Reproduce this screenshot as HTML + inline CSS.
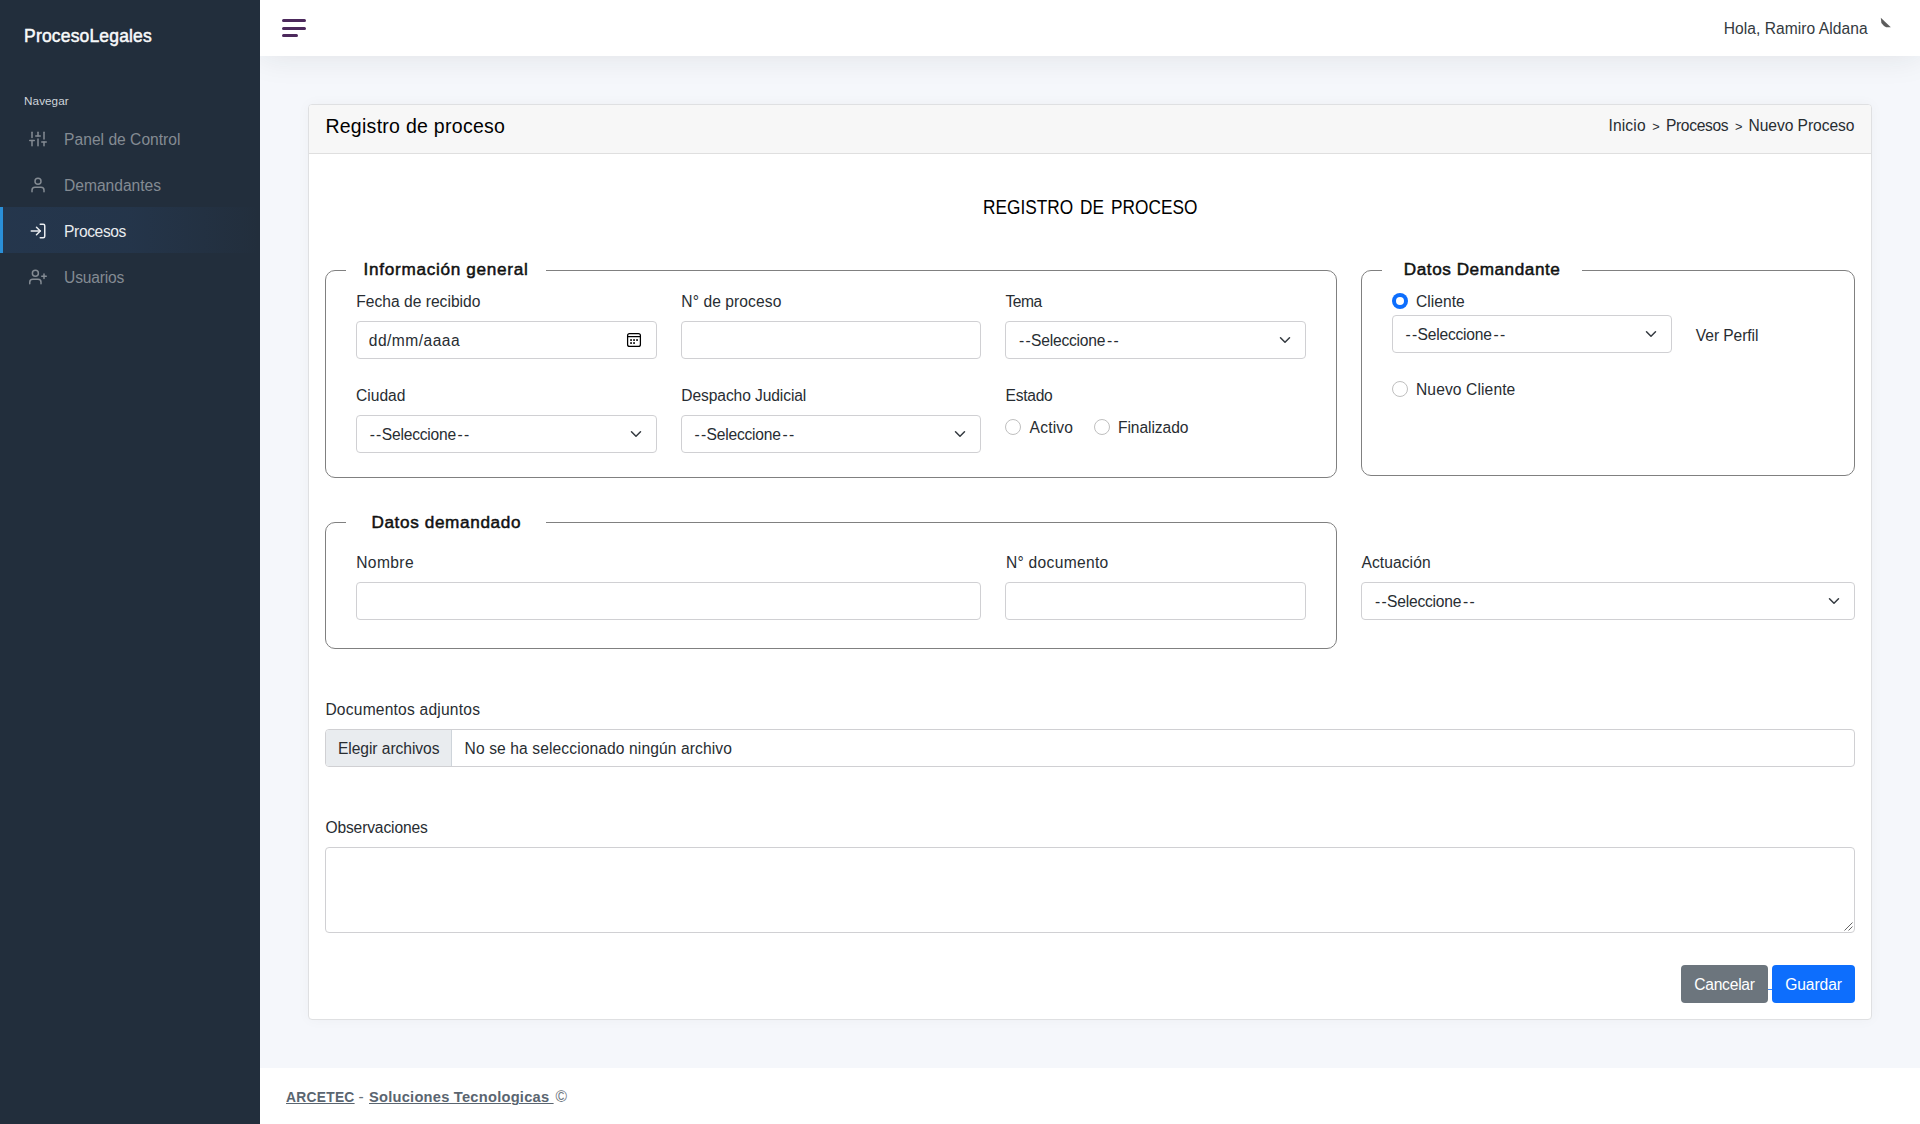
<!DOCTYPE html>
<html lang="es">
<head>
<meta charset="utf-8">
<title>Registro de proceso</title>
<style>
*{box-sizing:border-box;margin:0;padding:0}
html,body{width:1920px;height:1124px;overflow:hidden}
body{background:#f5f7fb;font-family:"Liberation Sans",Arial,sans-serif;position:relative;color:#212529}
.abs{position:absolute}
.t{position:absolute;display:block;line-height:0;white-space:nowrap;text-decoration:none;margin:0}
#sidebar{left:0;top:0;width:260px;height:1124px;background:#222e3c}
#active{left:0;top:207px;width:260px;height:46px;background:linear-gradient(90deg,rgba(59,125,221,.1),rgba(59,125,221,.088) 50%,transparent);border-left:3px solid #2a8fd8}
#topbar{left:0;top:0;width:1660px;height:56px;background:#fff;box-shadow:0 0 32px 0 rgba(33,37,41,.1)}
.hb{position:absolute;left:282px;height:3px;background:#4c295c;border-radius:1.5px}
#card{left:308px;top:104px;width:1564px;height:916px;background:#fff;border:1px solid #dfe0e2;border-radius:4px;box-shadow:0 0 14px 0 rgba(33,37,41,.035)}
#cardhead{left:309px;top:105px;width:1562px;height:49px;background:#f7f7f7;border-bottom:1px solid #dfdfdf;border-radius:3px 3px 0 0}
.fs{position:absolute;border:1px solid #808080;border-radius:10px}
.lgmask{position:absolute;height:3px;background:#fff;width:200px}
.inp{position:absolute;height:38px;background:#fff;border:1px solid #d0d0d3;border-radius:4px}
.chev{position:absolute;width:16px;height:12px}
.radio{position:absolute;width:16px;height:16px;border-radius:50%;border:1px solid #bfbfbf;background:#fff}
.radio.on{border:none;background:#0d6efd}
.radio.on:after{content:"";position:absolute;left:4px;top:4px;width:8px;height:8px;border-radius:50%;background:#fff}
.btn{position:absolute;height:38px;border-radius:4px}
#footer{left:260px;top:1068px;width:1660px;height:56px;background:#fff}
svg.ic{position:absolute;width:18px;height:18px;fill:none;stroke-width:2;stroke-linecap:round;stroke-linejoin:round}
</style>
</head>
<body>
<aside id="sidebar" class="abs"></aside>
<div id="active" class="abs"></div>
<div class="abs" style="left:260px;top:0;width:1660px;height:300px;overflow:hidden"><header id="topbar" class="abs"></header></div>
<div class="hb" style="top:19px;width:24px"></div>
<div class="hb" style="top:27px;width:24px"></div>
<div class="hb" style="top:34px;width:16px"></div>
<svg class="abs" style="left:1878px;top:15px" width="16" height="16" viewBox="0 0 16 16"><path d="M2.8 2.8 L12.8 12.3 L8.2 12.3 Q5.4 10.8 3.4 7.9 Z" fill="#5c5c5c"/></svg>

<svg class="ic" style="left:29px;top:130px" viewBox="0 0 24 24" stroke="#848b93"><line x1="4" y1="21" x2="4" y2="14"/><line x1="4" y1="10" x2="4" y2="3"/><line x1="12" y1="21" x2="12" y2="12"/><line x1="12" y1="8" x2="12" y2="3"/><line x1="20" y1="21" x2="20" y2="16"/><line x1="20" y1="12" x2="20" y2="3"/><line x1="1" y1="14" x2="7" y2="14"/><line x1="9" y1="8" x2="15" y2="8"/><line x1="17" y1="16" x2="23" y2="16"/></svg>
<svg class="ic" style="left:29px;top:176px" viewBox="0 0 24 24" stroke="#848b93"><path d="M20 21v-2a4 4 0 0 0-4-4H8a4 4 0 0 0-4 4v2"/><circle cx="12" cy="7" r="4"/></svg>
<svg class="ic" style="left:29px;top:222px" viewBox="0 0 24 24" stroke="#e9ecef"><path d="M15 3h4a2 2 0 0 1 2 2v14a2 2 0 0 1-2 2h-4"/><polyline points="10 17 15 12 10 7"/><line x1="15" y1="12" x2="3" y2="12"/></svg>
<svg class="ic" style="left:29px;top:268px" viewBox="0 0 24 24" stroke="#848b93"><path d="M16 21v-2a4 4 0 0 0-4-4H5a4 4 0 0 0-4 4v2"/><circle cx="8.5" cy="7" r="4"/><line x1="20" y1="8" x2="20" y2="14"/><line x1="23" y1="11" x2="17" y2="11"/></svg>

<main id="card" class="abs"></main>
<div id="cardhead" class="abs"></div>

<!-- fieldsets -->
<div class="fs" style="left:325px;top:270px;width:1012px;height:208px"></div>
<div class="lgmask" style="left:346px;top:269px"></div>
<div class="fs" style="left:1361px;top:270px;width:494px;height:206px"></div>
<div class="lgmask" style="left:1382px;top:269px"></div>
<div class="fs" style="left:325px;top:522px;width:1012px;height:127px"></div>
<div class="lgmask" style="left:346px;top:521px"></div>

<!-- row 1 -->
<div class="inp" style="left:356px;top:321px;width:301px"></div>
<svg class="abs" style="left:626px;top:332px" width="16" height="16" viewBox="0 0 16 16" fill="none" stroke="#000" stroke-width="1.25"><rect x="1.6" y="1.6" width="12.8" height="12.8" rx="2"/><line x1="1.6" y1="4.6" x2="14.4" y2="4.6"/><g fill="#000" stroke="none"><rect x="4.2" y="7.2" width="1.7" height="1.7"/><rect x="7.2" y="7.2" width="1.7" height="1.7"/><rect x="10.2" y="7.2" width="1.7" height="1.7"/><rect x="4.2" y="10.2" width="1.7" height="1.7"/><rect x="7.2" y="10.2" width="1.7" height="1.7"/></g></svg>
<div class="inp" style="left:681px;top:321px;width:300px"></div>
<div class="inp" style="left:1005px;top:321px;width:301px"></div>
<svg class="chev" style="left:1277px;top:334px" viewBox="0 0 16 16"><path fill="none" stroke="#343a40" stroke-linecap="round" stroke-linejoin="round" stroke-width="2" d="M2 5l6 6 6-6"/></svg>
<!-- row 2 -->
<div class="inp" style="left:356px;top:415px;width:301px"></div>
<svg class="chev" style="left:628px;top:428px" viewBox="0 0 16 16"><path fill="none" stroke="#343a40" stroke-linecap="round" stroke-linejoin="round" stroke-width="2" d="M2 5l6 6 6-6"/></svg>
<div class="inp" style="left:681px;top:415px;width:300px"></div>
<svg class="chev" style="left:952px;top:428px" viewBox="0 0 16 16"><path fill="none" stroke="#343a40" stroke-linecap="round" stroke-linejoin="round" stroke-width="2" d="M2 5l6 6 6-6"/></svg>
<div class="radio" style="left:1005px;top:419px"></div>
<div class="radio" style="left:1094px;top:419px"></div>
<!-- demandante -->
<div class="radio on" style="left:1392px;top:293px"></div>
<div class="inp" style="left:1392px;top:315px;width:280px"></div>
<svg class="chev" style="left:1643px;top:328px" viewBox="0 0 16 16"><path fill="none" stroke="#343a40" stroke-linecap="round" stroke-linejoin="round" stroke-width="2" d="M2 5l6 6 6-6"/></svg>
<div class="radio" style="left:1392px;top:381px"></div>
<!-- demandado -->
<div class="inp" style="left:356px;top:582px;width:625px"></div>
<div class="inp" style="left:1005px;top:582px;width:301px"></div>
<div class="inp" style="left:1361px;top:582px;width:494px"></div>
<svg class="chev" style="left:1826px;top:595px" viewBox="0 0 16 16"><path fill="none" stroke="#343a40" stroke-linecap="round" stroke-linejoin="round" stroke-width="2" d="M2 5l6 6 6-6"/></svg>
<!-- file -->
<div class="inp" style="left:325px;top:729px;width:1530px;overflow:hidden"><div style="position:absolute;left:0;top:0;width:126px;height:36px;background:#e9ecef;border-right:1px solid #ced4da"></div></div>
<!-- textarea -->
<div class="inp" style="left:325px;top:847px;width:1530px;height:86px"></div>
<svg class="abs" style="left:1844px;top:922px" width="9" height="9" viewBox="0 0 9 9" stroke="#666" stroke-width="1"><line x1="8.5" y1="0.5" x2="0.5" y2="8.5"/><line x1="8.5" y1="4.5" x2="4.5" y2="8.5"/></svg>
<!-- buttons -->
<div class="btn" style="left:1681px;top:965px;width:87px;background:#6c757d"></div>
<div class="abs" style="left:1768px;top:989px;width:4px;height:1px;background:#3d8bfd"></div>
<div class="btn" style="left:1772px;top:965px;width:83px;background:#0d6efd"></div>
<footer id="footer" class="abs"></footer>
<a class="t" id="brand" style="left:24.10px;top:36.00px;font-size:17.49px;font-weight:400;color:#f8f9fa;letter-spacing:0.172px;-webkit-text-stroke:0.5px #f8f9fa;">ProcesoLegales</a>
<span class="t" id="nav" style="left:24.10px;top:100.50px;font-size:11.7px;font-weight:400;color:#ced4da;letter-spacing:0.059px;">Navegar</span>
<a class="t" id="s1" style="left:64.10px;top:140.20px;font-size:15.6px;font-weight:400;color:#848b93;letter-spacing:0.014px;">Panel de Control</a>
<a class="t" id="s2" style="left:64.10px;top:186.30px;font-size:15.6px;font-weight:400;color:#848b93;letter-spacing:-0.018px;">Demandantes</a>
<a class="t" id="s3" style="left:64.10px;top:232.20px;font-size:15.6px;font-weight:400;color:#e9ecef;letter-spacing:-0.389px;">Procesos</a>
<a class="t" id="s4" style="left:64.10px;top:278.00px;font-size:15.6px;font-weight:400;color:#848b93;letter-spacing:-0.204px;">Usuarios</a>
<span class="t" id="hola" style="left:1723.70px;top:29.40px;font-size:15.6px;font-weight:400;color:#343a40;letter-spacing:0.051px;">Hola, Ramiro Aldana</span>
<h5 class="t" id="h5" style="left:325.40px;top:126.00px;font-size:19.5px;font-weight:400;color:#000;letter-spacing:0.278px;">Registro de proceso</h5>
<a class="t" id="bc1" style="left:1608.40px;top:126.10px;font-size:15.6px;font-weight:400;color:#282d32;letter-spacing:0.166px;">Inicio</a>
<span class="t" id="bc2" style="left:1652.30px;top:126.50px;font-size:12.79px;font-weight:400;color:#282d32;letter-spacing:1.131px;">&gt;</span>
<a class="t" id="bc3" style="left:1665.90px;top:126.10px;font-size:15.6px;font-weight:400;color:#282d32;letter-spacing:-0.327px;">Procesos</a>
<span class="t" id="bc4" style="left:1734.90px;top:126.50px;font-size:12.79px;font-weight:400;color:#282d32;letter-spacing:0.831px;">&gt;</span>
<span class="t" id="bc5" style="left:1748.50px;top:126.10px;font-size:15.6px;font-weight:400;color:#282d32;letter-spacing:-0.056px;">Nuevo Proceso</span>
<h4 class="t" id="title" style="left:983.00px;top:206.60px;font-size:19.5px;font-weight:400;color:#000;word-spacing:2.482px;transform:scaleX(0.885);transform-origin:0 50%;">REGISTRO DE PROCESO</h4>
<strong class="t" id="lg1" style="left:363.60px;top:269.30px;font-size:17.16px;font-weight:400;color:#111;letter-spacing:0.698px;-webkit-text-stroke:0.5px #111;">Información general</strong>
<strong class="t" id="lg2" style="left:1403.80px;top:269.30px;font-size:17.16px;font-weight:400;color:#111;letter-spacing:0.548px;-webkit-text-stroke:0.5px #111;">Datos Demandante</strong>
<strong class="t" id="lg3" style="left:371.40px;top:521.70px;font-size:17.16px;font-weight:400;color:#111;letter-spacing:0.632px;-webkit-text-stroke:0.5px #111;">Datos demandado</strong>
<label class="t" id="l1" style="left:356.30px;top:302.40px;font-size:15.6px;font-weight:400;color:#282d32;letter-spacing:0.008px;">Fecha de recibido</label>
<label class="t" id="l2" style="left:681.30px;top:302.40px;font-size:15.6px;font-weight:400;color:#282d32;letter-spacing:0.086px;">N° de proceso</label>
<label class="t" id="l3" style="left:1005.50px;top:302.30px;font-size:15.6px;font-weight:400;color:#282d32;letter-spacing:-0.460px;">Tema</label>
<label class="t" id="l4" style="left:355.90px;top:396.30px;font-size:15.6px;font-weight:400;color:#282d32;letter-spacing:0.030px;">Ciudad</label>
<label class="t" id="l5" style="left:681.30px;top:396.30px;font-size:15.6px;font-weight:400;color:#282d32;letter-spacing:-0.098px;">Despacho Judicial</label>
<label class="t" id="l6" style="left:1005.50px;top:396.40px;font-size:15.6px;font-weight:400;color:#282d32;letter-spacing:-0.260px;">Estado</label>
<label class="t" id="r1" style="left:1029.60px;top:428.30px;font-size:15.6px;font-weight:400;color:#282d32;letter-spacing:0.172px;">Activo</label>
<label class="t" id="r2" style="left:1118.00px;top:428.30px;font-size:15.6px;font-weight:400;color:#282d32;letter-spacing:-0.068px;">Finalizado</label>
<span class="t" id="date" style="left:368.80px;top:341.40px;font-size:15.6px;font-weight:400;color:#282d32;letter-spacing:0.461px;">dd/mm/aaaa</span>
<span class="t" id="sel1a" style="left:1019.10px;top:341.40px;font-size:15.6px;font-weight:400;color:#282d32;letter-spacing:1.105px;">--</span>
<span class="t" id="sel1b" style="left:1031.10px;top:341.40px;font-size:15.6px;font-weight:400;color:#282d32;letter-spacing:-0.220px;">Seleccione</span>
<span class="t" id="sel1c" style="left:1106.90px;top:341.40px;font-size:15.6px;font-weight:400;color:#282d32;letter-spacing:1.305px;">--</span>
<span class="t" id="sel2a" style="left:369.80px;top:435.20px;font-size:15.6px;font-weight:400;color:#282d32;letter-spacing:1.105px;">--</span>
<span class="t" id="sel2b" style="left:381.80px;top:435.20px;font-size:15.6px;font-weight:400;color:#282d32;letter-spacing:-0.220px;">Seleccione</span>
<span class="t" id="sel2c" style="left:457.60px;top:435.20px;font-size:15.6px;font-weight:400;color:#282d32;letter-spacing:1.305px;">--</span>
<span class="t" id="sel3a" style="left:694.60px;top:435.20px;font-size:15.6px;font-weight:400;color:#282d32;letter-spacing:1.105px;">--</span>
<span class="t" id="sel3b" style="left:706.60px;top:435.20px;font-size:15.6px;font-weight:400;color:#282d32;letter-spacing:-0.220px;">Seleccione</span>
<span class="t" id="sel3c" style="left:782.50px;top:435.20px;font-size:15.6px;font-weight:400;color:#282d32;letter-spacing:1.255px;">--</span>
<label class="t" id="cli" style="left:1416.00px;top:302.40px;font-size:15.6px;font-weight:400;color:#282d32;letter-spacing:0.036px;">Cliente</label>
<span class="t" id="sel4a" style="left:1405.60px;top:335.40px;font-size:15.6px;font-weight:400;color:#282d32;letter-spacing:1.105px;">--</span>
<span class="t" id="sel4b" style="left:1417.60px;top:335.40px;font-size:15.6px;font-weight:400;color:#282d32;letter-spacing:-0.220px;">Seleccione</span>
<span class="t" id="sel4c" style="left:1493.40px;top:335.40px;font-size:15.6px;font-weight:400;color:#282d32;letter-spacing:1.305px;">--</span>
<a class="t" id="ver" style="left:1695.80px;top:336.30px;font-size:15.6px;font-weight:400;color:#282d32;letter-spacing:-0.067px;">Ver Perfil</a>
<label class="t" id="ncli" style="left:1416.00px;top:389.90px;font-size:15.6px;font-weight:400;color:#282d32;letter-spacing:0.111px;">Nuevo Cliente</label>
<label class="t" id="nom" style="left:356.20px;top:563.40px;font-size:15.6px;font-weight:400;color:#282d32;letter-spacing:0.389px;">Nombre</label>
<label class="t" id="ndoc" style="left:1005.90px;top:562.50px;font-size:15.6px;font-weight:400;color:#282d32;letter-spacing:0.301px;">N° documento</label>
<label class="t" id="act" style="left:1361.40px;top:562.50px;font-size:15.6px;font-weight:400;color:#282d32;letter-spacing:0.091px;">Actuación</label>
<span class="t" id="sel5a" style="left:1375.10px;top:602.40px;font-size:15.6px;font-weight:400;color:#282d32;letter-spacing:1.105px;">--</span>
<span class="t" id="sel5b" style="left:1387.10px;top:602.40px;font-size:15.6px;font-weight:400;color:#282d32;letter-spacing:-0.220px;">Seleccione</span>
<span class="t" id="sel5c" style="left:1462.90px;top:602.40px;font-size:15.6px;font-weight:400;color:#282d32;letter-spacing:1.305px;">--</span>
<label class="t" id="docs" style="left:325.40px;top:709.50px;font-size:15.6px;font-weight:400;color:#282d32;letter-spacing:0.208px;">Documentos adjuntos</label>
<span class="t" id="eleg" style="left:337.90px;top:748.80px;font-size:15.6px;font-weight:400;color:#282d32;letter-spacing:-0.044px;">Elegir archivos</span>
<span class="t" id="nose" style="left:464.60px;top:748.80px;font-size:15.6px;font-weight:400;color:#282d32;letter-spacing:0.107px;">No se ha seleccionado ningún archivo</span>
<label class="t" id="obs" style="left:325.40px;top:827.50px;font-size:15.6px;font-weight:400;color:#282d32;letter-spacing:-0.132px;">Observaciones</label>
<a class="t" id="canc" style="left:1694.20px;top:984.60px;font-size:15.6px;font-weight:400;color:#fff;letter-spacing:-0.226px;">Cancelar</a>
<a class="t" id="guar" style="left:1785.20px;top:984.60px;font-size:15.6px;font-weight:400;color:#fff;letter-spacing:-0.060px;">Guardar</a>
<a class="t" id="f1" style="left:285.60px;top:1097.20px;font-size:15.13px;font-weight:700;color:#5a6570;letter-spacing:0.325px;transform:scaleX(0.91);transform-origin:0 50%;text-decoration:underline;text-decoration-thickness:1px;text-underline-offset:1.2px;">ARCETEC</a>
<span class="t" id="f2" style="left:358.60px;top:1097.20px;font-size:15.6px;font-weight:400;color:#6c757d;letter-spacing:0.397px;">-</span>
<a class="t" id="f3" style="left:368.90px;top:1097.20px;font-size:15.13px;font-weight:700;color:#5a6570;letter-spacing:0.237px;transform:scaleX(0.97);transform-origin:0 50%;text-decoration:underline;text-decoration-thickness:1px;text-underline-offset:1.2px;white-space:pre;">Soluciones Tecnologicas </a>
<span class="t" id="f4" style="left:555.60px;top:1097.20px;font-size:15.6px;font-weight:400;color:#6c757d;letter-spacing:0.400px;">©</span>
</body>
</html>
